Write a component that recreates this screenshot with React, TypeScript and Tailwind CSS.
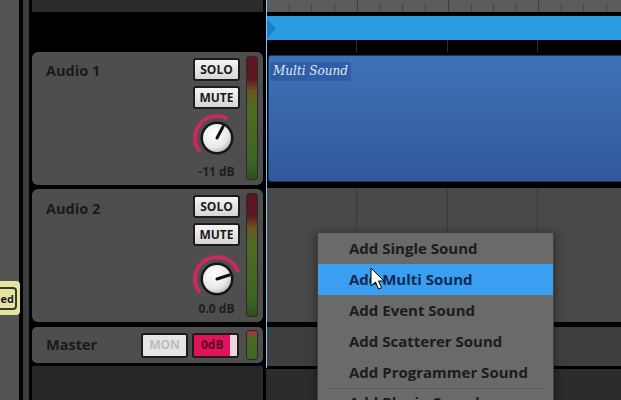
import React from "react";

const GRID = "grid grid-cols-[91px_91px_90px_1fr]";

function Knob({ angle, cy }: { angle: number; cy: number }) {
  const cx = 24;
  const r = 22;
  const start = -128;
  const pt = (a: number, rad: number) => {
    const t = (a * Math.PI) / 180;
    return [cx + rad * Math.sin(t), cy - rad * Math.cos(t)];
  };
  const [sx, sy] = pt(start, r);
  const [ex, ey] = pt(angle, r);
  const large = angle - start > 180 ? 1 : 0;
  const [ix, iy] = pt(angle, 13);
  return (
    <svg width="48" height="55" viewBox="0 0 48 55" className="block">
      <defs>
        <radialGradient id={`kg${cy}`} cx="40%" cy="35%" r="70%">
          <stop offset="0%" stopColor="#ffffff" />
          <stop offset="70%" stopColor="#e8e8e8" />
          <stop offset="100%" stopColor="#b8b8b8" />
        </radialGradient>
      </defs>
      <path
        d={`M ${sx} ${sy} A ${r} ${r} 0 ${large} 1 ${ex} ${ey}`}
        fill="none"
        stroke="#c62a60"
        strokeWidth="4"
      />
      <circle cx={cx} cy={cy} r="16.5" fill="#151515" />
      <circle cx={cx} cy={cy} r="14" fill={`url(#kg${cy})`} />
      <line x1={cx} y1={cy} x2={ix} y2={iy} stroke="#111" strokeWidth="3" strokeLinecap="round" />
    </svg>
  );
}

function Btn({ label }: { label: string }) {
  return (
    <div className="h-[23px] w-[47px] rounded-[3px] border-2 border-[#1c1c1c] bg-gradient-to-b from-[#f4f4f4] to-[#d6d6d6] flex items-center justify-center text-[12px] font-bold text-[#1a1a1a] leading-none">
      {label}
    </div>
  );
}

function Meter({ h }: { h: number }) {
  return (
    <div
      className="w-[12px] rounded-[3px] border border-[#2a2a2a] bg-[linear-gradient(to_bottom,#5e1422_0%,#5c1a20_18%,#6a5622_28%,#4d6a24_42%,#3f6524_85%,#2f4f1e_100%)]"
      style={{ height: h }}
    />
  );
}

function TrackPanel({ name, db, angle, cy, pt }: { name: string; db: string; angle: number; cy: number; pt: string }) {
  return (
    <div className="h-[133px] rounded-[6px] bg-[#4e4e4e] flex">
      <div className={`flex-1 pl-[14px] ${pt} text-[14.5px] font-bold text-[#1a1a1a] leading-[20px]`}>{name}</div>
      <div className="w-[47px] pt-[6px] flex flex-col items-center">
        <Btn label="SOLO" />
        <div className="h-[5px]" />
        <Btn label="MUTE" />
        <Knob angle={angle} cy={cy} />
        <div className="text-[12px] font-bold text-[#1e1e1e] leading-[16px]">{db}</div>
      </div>
      <div className="w-[6px]" />
      <div className="pt-[4px]">
        <Meter h={124} />
      </div>
      <div className="w-[5px]" />
    </div>
  );
}

function GridRow({ h, bg, line }: { h: number; bg: string; line: string }) {
  return (
    <div className={`${GRID} ${bg}`} style={{ height: h }}>
      <div className={`border-r ${line}`} />
      <div className={`border-r ${line}`} />
      <div className={`border-r ${line}`} />
      <div />
    </div>
  );
}

function Ruler() {
  const majors = [0, 91, 182, 272];
  const minors: number[] = [];
  majors.forEach((m) => {
    for (let i = 1; i < 4; i++) minors.push(m + i * 22.7);
  });
  return (
    <svg width="355" height="12" className="block bg-[#5b5b5b]">
      {majors.map((x) => (
        <line key={`M${x}`} x1={x + 0.5} y1="0" x2={x + 0.5} y2="12" stroke="#3c3c3c" strokeWidth="1" />
      ))}
      {minors.map((x) => (
        <line key={`m${x}`} x1={Math.round(x) + 0.5} y1="4" x2={Math.round(x) + 0.5} y2="12" stroke="#454545" strokeWidth="1" />
      ))}
    </svg>
  );
}

export default function App() {
  const items = ["Add Single Sound", "Add Multi Sound", "Add Event Sound", "Add Scatterer Sound", "Add Programmer Sound"];
  return (
    <div className="relative w-[621px] h-[400px] overflow-hidden bg-black flex font-['Open_Sans',sans-serif]">
      <div className="w-[19px] bg-[#535353]" />
      <div className="w-[4px] bg-black" />
      <div className="w-[6px] bg-[#3c3c3c]" />
      <div className="w-[3px] bg-black" />

      {/* header column */}
      <div className="w-[231px] flex flex-col">
        <div className="h-[12px] bg-[#2b2b2b]" />
        <div className="h-[40px]" />
        <TrackPanel name="Audio 1" db="-11 dB" angle={28} cy={29} pt="pt-[9px]" />
        <div className="h-[4px]" />
        <TrackPanel name="Audio 2" db="0.0 dB" angle={72} cy={33} pt="pt-[10px]" />
        <div className="h-[5px]" />
        <div className="h-[36px] rounded-[5px] bg-[#4e4e4e] flex items-center">
          <div className="flex-1 pl-[14px] text-[14.5px] font-bold text-[#1a1a1a]">Master</div>
          <div className="h-[25px] w-[47px] rounded-[3px] border-2 border-[#1c1c1c] bg-[#e6e6e6] flex items-center justify-center text-[12px] font-bold text-[#bdbdbd]">
            MON
          </div>
          <div className="w-[4px]" />
          <div className="relative h-[25px] w-[47px] rounded-[3px] border-2 border-[#1c1c1c] bg-[#e2135d] flex items-center pl-[7px] text-[12px] font-bold text-[#5a0820] overflow-hidden">
            0dB
            <div className="absolute right-0 top-0 bottom-0 w-[7px] bg-[#ecd6de]" />
          </div>
          <div className="w-[7px]" />
          <div className="h-[30px] w-[12px] rounded-[3px] border border-[#2a2a2a] bg-[linear-gradient(to_bottom,#b0303e_0%,#b0303e_12%,#4d6a24_14%,#3f6524_100%)]" />
          <div className="w-[5px]" />
        </div>
        <div className="h-[3px]" />
        <div className="flex-1 bg-[#272727]" />
      </div>

      <div className="w-[3px] bg-black" />

      {/* timeline column */}
      <div className="flex-1 flex flex-col">
        <Ruler />
        <div className="h-[4px]" />
        <div className="h-[24px] bg-[#2a9de2] flex items-center">
          <svg width="11" height="21" className="block">
            <polygon points="0,0 10,10.5 0,21" fill="#1f7fc2" />
          </svg>
        </div>
        <GridRow h={12} bg="bg-black" line="border-[#2e2e2e]" />
        <div className="h-[133px] pt-[3px] pb-[3px] pl-[2px]">
          <div className="h-full rounded-l-[3px] border border-r-0 border-[#1c3560] bg-gradient-to-b from-[#3e72b6] via-[#3866a8] to-[#32589a] p-[1px]">
            <div className="inline-block rounded-[3px] bg-[#2f5ea6] px-[3px] h-[19px] leading-[19px] font-['DejaVu_Serif',serif] italic text-[12px] text-[#e2e8f2]">
              Multi Sound
            </div>
          </div>
        </div>
        <div className="h-[3px]" />
        <GridRow h={134} bg="bg-[#484848]" line="border-[#3a3a3a]" />
        <div className="h-[5px]" />
        <div className="h-[39px] bg-[#3e3e3e]" />
        <div className="h-[3px]" />
        <div className="flex-1 bg-[#2c2c2c]" />
      </div>

      {/* playhead */}
      <div className="absolute left-[266px] top-0 h-[368px] w-px bg-[#86c4ee]" />

      {/* tooltip */}
      <div className="absolute left-0 top-[281px] h-[34px] w-[20px] rounded-r-[4px] bg-[#e3e3a3] flex items-center">
        <div className="h-[23px] w-[17px] rounded-r-[4px] border-2 border-l-0 border-[#3a3a24] flex items-center justify-end pr-[1px] text-[11px] leading-none font-bold text-[#1e1e1e]">
          ed
        </div>
      </div>

      {/* context menu */}
      <div className="absolute left-[317px] top-[232px] w-[237px] h-[200px] bg-[#6a6a6a] border border-[#404040] shadow-[0_2px_8px_rgba(0,0,0,0.5)]">
        {items.map((t, i) => (
          <div
            key={t}
            className={`h-[31px] flex items-center pl-[31px] text-[15px] font-bold ${
              i === 1 ? "bg-[#3a9ff0] text-[#0e2a52]" : "text-[#1c1c1c]"
            }`}
          >
            {t}
          </div>
        ))}
        <div className="mx-[10px] h-px bg-[#5a5a5a]" />
        <div className="h-[31px] flex items-start pt-[3px] leading-[20px] pl-[31px] pr-[14px] text-[15px] font-bold text-[#1c1c1c]">
          <span className="flex-1">Add Plugin Sound</span>
          <span>›</span>
        </div>
      </div>

      {/* cursor */}
      <svg className="absolute left-[370px] top-[267px]" width="15" height="24" viewBox="0 0 15 24">
        <path d="M1 1 L1 19 L5.5 15 L8.5 22 L11.5 20.8 L8.5 14 L14 14 Z" fill="#ffffff" stroke="#000" strokeWidth="1" strokeLinejoin="round" />
      </svg>
    </div>
  );
}
